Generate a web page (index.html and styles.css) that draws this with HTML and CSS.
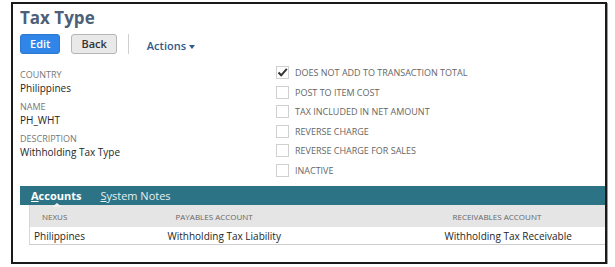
FILE: index.html
```html
<!DOCTYPE html>
<html lang="en">
  <head>
    <meta charset="UTF-8" />
    <title>Tax Type</title>
    <link rel="stylesheet" href="styles.css">
  </head>
  <body>
    <div class="frame">
      <h1 class="title">Tax Type</h1>

      <div class="toolbar">
        <button class="btn btn-primary">Edit</button>
        <button class="btn">Back</button>
        <span class="sep"></span>
        <span class="actions">Actions <span class="caret"></span></span>
      </div>

      <div class="fields">
        <div class="col-left">
          <div class="field">
            <div class="label">COUNTRY</div>
            <div class="value">Philippines</div>
          </div>
          <div class="field">
            <div class="label">NAME</div>
            <div class="value">PH_WHT</div>
          </div>
          <div class="field">
            <div class="label">DESCRIPTION</div>
            <div class="value">Withholding Tax Type</div>
          </div>
        </div>

        <div class="col-right">
          <div class="check">
            <span class="box">
              <svg width="11" height="11" viewBox="0 0 11 11"><path d="M1.5 5.5 L4.2 8.3 L9.8 1.8" fill="none" stroke="#333" stroke-width="2"/></svg>
            </span>
            DOES NOT ADD TO TRANSACTION TOTAL
          </div>
          <div class="check"><span class="box"></span>POST TO ITEM COST</div>
          <div class="check"><span class="box"></span>TAX INCLUDED IN NET AMOUNT</div>
          <div class="check"><span class="box"></span>REVERSE CHARGE</div>
          <div class="check"><span class="box"></span>REVERSE CHARGE FOR SALES</div>
          <div class="check"><span class="box"></span>INACTIVE</div>
        </div>
      </div>

      <div class="tabs">
        <span class="tab active"><u>A</u>ccounts</span>
        <span class="tab"><u>S</u>ystem Notes</span>
      </div>

      <table class="grid">
        <colgroup>
          <col class="w1">
          <col class="w2">
          <col>
        </colgroup>
        <thead>
          <tr>
            <th>NEXUS</th>
            <th>PAYABLES ACCOUNT</th>
            <th>RECEIVABLES ACCOUNT</th>
          </tr>
        </thead>
        <tbody>
          <tr>
            <td>Philippines</td>
            <td>Withholding Tax Liability</td>
            <td>Withholding Tax Receivable</td>
          </tr>
        </tbody>
      </table>
    </div>
  </body>
</html>
```

FILE: styles.css
```css
body {
  margin: 0;
  padding: 2px 0 0 11px;
  background: #fff;
  font-family: "Open Sans", Arial, sans-serif;
  color: #262626;
}

.frame {
  width: 596px;
  height: 262px;
  border: 2px solid #1a1a1a;
  box-shadow: 1px 1px 0 #9a9a9a;
  overflow: hidden;
  padding-left: 7px;
  box-sizing: border-box;
}

.title {
  margin: 2px 0 0 0;
  font-size: 17px;
  font-weight: bold;
  color: #4d5f79;
  line-height: 24px;
}

.toolbar {
  display: flex;
  align-items: center;
  height: 21px;
  margin-top: 3px;
}

.btn {
  font-family: inherit;
  font-size: 11px;
  font-weight: 600;
  height: 20px;
  padding: 0 9px;
  border: 1px solid #b5b5b5;
  border-radius: 3px;
  background: #e9e9e9;
  color: #333;
  margin-right: 11px;
  line-height: 18px;
}

.btn-primary {
  background: #2f86e8;
  border-color: #2a78d0;
  color: #fff;
  padding: 0 9px;
}

.sep {
  width: 1px;
  height: 20px;
  background: #cfcfcf;
  margin-right: 18px;
}

.actions {
  font-size: 11px;
  font-weight: 600;
  color: #2f5a8d;
  margin-top: 4px;
}

.caret {
  display: inline-block;
  width: 0;
  height: 0;
  border-left: 3px solid transparent;
  border-right: 3px solid transparent;
  border-top: 4px solid #2f5a8d;
  vertical-align: middle;
}

.fields {
  display: flex;
  margin-top: 14px;
}

.col-left {
  width: 256px;
}

.field {
  margin-bottom: 5px;
}

.label {
  font-size: 9px;
  color: #777;
  line-height: 13px;
}

.value {
  font-size: 10px;
  color: #262626;
  line-height: 14px;
}

.col-right {
  margin-top: -5px;
}

.check {
  display: flex;
  align-items: center;
  font-size: 9px;
  color: #666;
  height: 19.5px;
}

.box {
  width: 11px;
  height: 11px;
  border: 1px solid #d0d0d0;
  margin-right: 6px;
  display: inline-flex;
  align-items: center;
  justify-content: center;
  background: #fff;
}

.tabs {
  margin-top: 6px;
  background: #2b7385;
  height: 19px;
  display: flex;
  align-items: center;
  padding-left: 11px;
}

.tab {
  color: #e6f0f2;
  font-size: 11px;
  margin-right: 19px;
}

.tab.active {
  font-weight: bold;
  color: #fff;
  position: relative;
}

.tab.active::after {
  content: "";
  position: absolute;
  left: 21px;
  bottom: -4px;
  border-left: 5px solid transparent;
  border-right: 5px solid transparent;
  border-bottom: 4px solid #f1f1f1;
}

.grid {
  margin-left: 9px;
  width: 590px;
  table-layout: fixed;
  border-collapse: collapse;
  border-left: 1px solid #d6d6d6;
  border-bottom: 1px solid #cfcfcf;
}

.grid .w1 {
  width: 134px;
}

.grid .w2 {
  width: 277px;
}

.grid th {
  background: #e5e5e5;
  font-size: 8px;
  font-weight: normal;
  color: #666;
  text-align: left;
  height: 22px;
  padding: 0 0 0 12px;
}

.grid td {
  font-size: 10px;
  color: #262626;
  height: 17px;
  padding: 0 0 0 4px;
}
```
